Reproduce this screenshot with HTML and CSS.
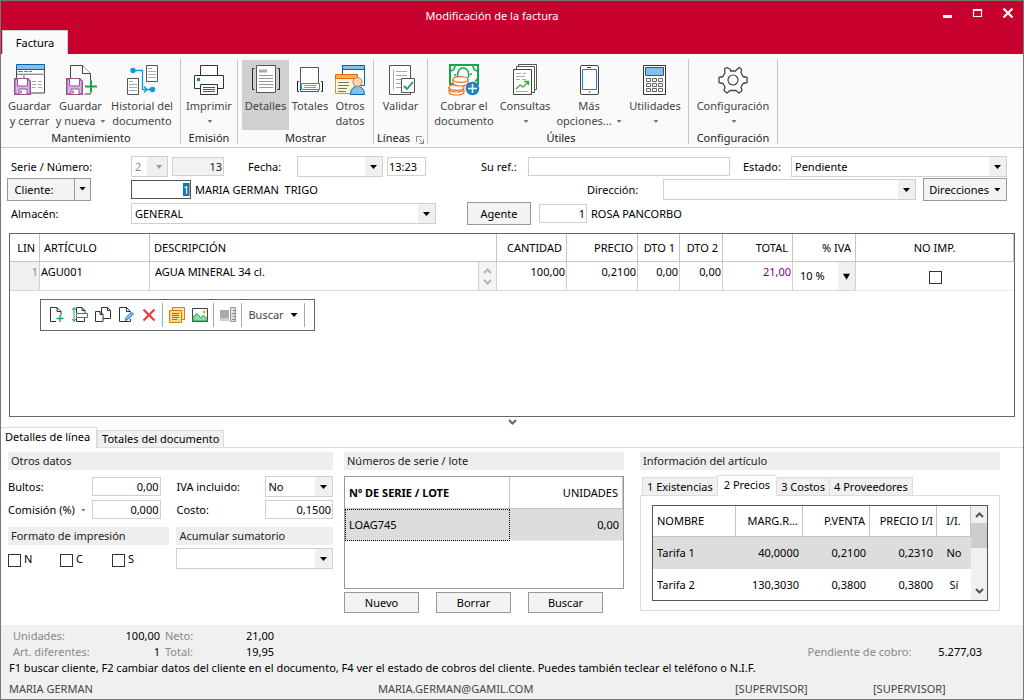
FILE: index.html
```html
<!DOCTYPE html>
<html lang="es">
<head>
<meta charset="utf-8">
<title>Modificación de la factura</title>
<link rel="stylesheet" href="styles.css">
</head>
<body>
<svg class="defs" aria-hidden="true">
  <symbol id="floppy" viewBox="0 0 17 17">
    <path d="M.75.75h13l2.5 2.5v13H.75z" fill="#deb4e0" stroke="#9b4f96" stroke-width="1.5"/>
    <path d="M3.5 1v7h10V1M5 16v-5h8v5" fill="#fff" stroke="#9b4f96"/>
    <path d="M7 12.500v3" stroke="#777" stroke-width="1.500"/>
  </symbol>
</svg>
<div class="window">
  <header class="titlebar">
    <h1 class="title">Modificación de la factura</h1>
    <button class="winbtn" aria-label="Minimizar"><svg width="12" height="12"><path d="M1 9.500h9" stroke="#fff" stroke-width="3"/></svg></button>
    <button class="winbtn" aria-label="Maximizar"><svg width="12" height="12"><path d="M1.500 2.500h8v7h-8zM1 3h9" fill="none" stroke="#fff" stroke-width="1.200"/><path d="M1 3h9" stroke="#fff" stroke-width="2"/></svg></button>
    <button class="winbtn" aria-label="Cerrar"><svg width="12" height="12"><path d="M1.500 1.500l9 9m0-9l-9 9" stroke="#fff" stroke-width="2.200"/></svg></button>
  </header>
  <nav class="maintabs"><button class="maintab">Factura</button></nav>

  <section class="ribbon">
    <div class="group group-save">
      <div class="tools">
        <button class="tool w51"><svg class="ico" viewBox="0 0 32 32"><path d="M2.500 5v24h28V5" fill="#fff" stroke="#444"/><path d="M2.500.5h28v5h-28z" fill="#83beec" stroke="#0063b1"/><path d="M4 7.500h5m1 0h4m1 0h3M3 10.500h28M10 10v5" stroke="#777"/><path d="M3 10h28M18 17.500h4m2 0h4M18 20.500h4m2 0h4M18 23.500h4m2 0h4M9.500 10v5" stroke="#aaa"/><use href="#floppy" y="14" width="17" height="17"/></svg><span>Guardar<br>y cerrar</span></button>
        <button class="tool w51"><svg class="ico" viewBox="0 0 32 32"><path d="M5.500 14V1.500h12l8 8V21M25.500 29v1h-6" fill="none" stroke="#444"/><path d="M17.500 1.500v8h8" fill="#fff" stroke="#444"/><use href="#floppy" x="1" y="14" width="17" height="17"/><path d="M20 22.500h12M26 16.500v12" stroke="#10a64a" stroke-width="2"/></svg><span>Guardar<br>y nueva <i class="dd"></i></span></button>
        <button class="tool w72"><svg class="ico" viewBox="0 0 32 32"><path d="M20.500 1.500h11v16h-11zM1.500 14.500h11v16h-11z" fill="#fff" stroke="#555"/><path d="M22 4.500h4m-4 3h8m-8 3h8m-8 3h8M3 17.500h4m-4 3h8m-8 3h8m-8 3h8" stroke="#aaa"/><path d="M7 6.500h9.500v19H26M18 22.500l3 3-3 3" fill="none" stroke="#0a9be0" stroke-width="1.300"/><circle cx="7" cy="6.500" r="2.700" fill="#0a9be0"/><circle cx="26.500" cy="25.500" r="2.700" fill="#0a9be0"/></svg><span>Historial del<br>documento</span></button>
      </div>
      <h2 class="caption">Mantenimiento</h2>
    </div>
    <div class="group">
      <div class="tools">
        <button class="tool w56"><svg class="ico" viewBox="0 0 32 32"><path d="M7.500 12V1.500h17V12" fill="#fff" stroke="#333"/><path d="M1.500 11.500h29v13h-29z" fill="#fff" stroke="#333"/><path d="M7.500 20.500h17v10h-17z" fill="#fff" stroke="#333"/><path d="M10 23.500h12m-12 2h12m-12 2h12" stroke="#555"/><path d="M4 14h3v3H4z" fill="#0a7fd0"/></svg><span>Imprimir<br><i class="dd"></i></span></button>
      </div>
      <h2 class="caption">Emisión</h2>
    </div>
    <div class="group group-show">
      <div class="tools">
        <button class="tool w47 active" aria-pressed="true"><svg class="ico" viewBox="0 0 32 32"><path d="M6.500 1.500h19v27h-19z" fill="#fff" stroke="#555"/><path d="M9 7h8" stroke="#aaa" stroke-width="3"/><path d="M9 11.500h14m-14 3h14m-14 3h14m-14 3h14m-14 3h14" stroke="#999"/><path d="M4.500 4.500h-2v21h2M27.500 4.500h2v21h-2" fill="none" stroke="#222"/></svg><span>Detalles</span></button>
        <button class="tool w42"><svg class="ico" viewBox="0 0 32 32"><path d="M6.500 3.500h18v24h-18z" fill="#fff" stroke="#555"/><path d="M8.500 19.500h19M8.500 19.500h14v6h-14z" fill="#fff" stroke="none"/><path d="M7.500 19.500h18v6h-18z" fill="#fff" stroke="#0a9be0"/><path d="M10 21.500h12m-12 2h12" stroke="#999"/><path d="M5 17.500H3.500v10H5M27 17.500h1.500v10H27" fill="none" stroke="#222"/></svg><span>Totales</span></button>
        <button class="tool w38"><svg class="ico" viewBox="0 0 32 32"><path d="M8.500 1.500h22v20h-22z" fill="#fff" stroke="#0063b1"/><path d="M8.500 1.500h22v4h-22z" fill="#83beec" stroke="#0063b1"/><path d="M1.500 10.500h22v19h-22z" fill="#fff3d4" stroke="#d9962f"/><path d="M1.500 10.500h22v4h-22z" fill="#ffb347" stroke="#dd6b10"/><path d="M4 18.500h11m-11 3h11m-11 3h9m-9 3h8" stroke="#777"/><path d="M16.500 30.500c0-11 14-11 14 0z" fill="#83beec" stroke="#0063b1"/><circle cx="23.500" cy="18" r="4.500" fill="#fbd5ac" stroke="#b88656"/></svg><span>Otros<br>datos</span></button>
      </div>
      <h2 class="caption">Mostrar</h2>
    </div>
    <div class="group">
      <div class="tools">
        <button class="tool w53"><svg class="ico" viewBox="0 0 32 32"><path d="M4.500 1.500h21v29h-21z" fill="#fff" stroke="#555"/><path d="M11 7.500h11m-11 4h11m-11 4h8m-8 4h6m-6 4h5" stroke="#aaa"/><path d="M8 7h1m-1 4h1m-1 4h1m-1 4h1m-1 4h1" stroke="#d22"/><path d="M8 9h1m-1 4h1m-1 4h1m-1 4h1m-1 4h1" stroke="#19a24a"/><path d="M16.500 14.500h13v14h-13z" fill="#fff" stroke="#555"/><path d="M19 22l3 3 6-7" fill="none" stroke="#10a64a" stroke-width="1.800"/></svg><span>Validar</span></button>
      </div>
      <h2 class="caption">Líneas <svg class="launch" width="8" height="8"><path d="M.5 6V.5H6M3 3l4 4M7.500 3.500v4h-4" fill="none" stroke="#888"/></svg></h2>
    </div>
    <div class="group group-util">
      <div class="tools">
        <button class="tool w60"><svg class="ico" viewBox="0 0 32 32"><path d="M2 1h28v19H2z" fill="#fff" stroke="#10a64a" stroke-width="2"/><path d="M2 7c4 0 5-2 5-6m23 6c-4 0-5-2-5-6M11 16c-3-4-1-12 4-12s7 6 5 10M6 11h2m14-1h2M27 18l3-4" fill="none" stroke="#10a64a" stroke-width="1.500"/><g fill="#fff" stroke="#e9732a" stroke-width="1.200"><path d="M1 26v2c1 4 14 4 15 0v-2M1 23v2c1 4 14 4 15 0"/><ellipse cx="8.500" cy="23.500" rx="7.500" ry="2.800"/><path d="M5 15v4c1 4 14 4 15 0v-4"/><ellipse cx="12.500" cy="15.500" rx="7.500" ry="2.800"/></g><circle cx="24.500" cy="24.500" r="6.800" fill="#1783cf"/><path d="M20 24.500h9m-4.500-4.500v9" stroke="#fff" stroke-width="1.500"/></svg><span>Cobrar el<br>documento</span></button>
        <button class="tool w62"><svg class="ico" viewBox="0 0 32 32"><path d="M9.500.5h18v25h-18z" fill="#fff" stroke="#555"/><path d="M7.500 2.500h18v26h-18z" fill="#fff" stroke="#555"/><path d="M4.500 5.500h18v25h-18z" fill="#fff" stroke="#444"/><path d="M7 9.500h5m2 0h3m-10 3h9m-9 3h4m2 0h4M7 27.500h12" stroke="#aaa"/><path d="M7 25l4-4 3 2 5-5m-4-.5h4.500V21" fill="none" stroke="#3aa935" stroke-width="1.300"/></svg><span>Consultas<br><i class="dd"></i></span></button>
        <button class="tool w66"><svg class="ico" viewBox="0 0 32 32"><rect x="7.500" y="1.500" width="18" height="29" rx="1.500" fill="#fff" stroke="#444"/><path d="M9.500 5.500h14v20h-14z" fill="#fff" stroke="#1783cf"/><path d="M14 3.500h4m-2.500 24.500h2" stroke="#444"/></svg><span>Más<br>opciones... <i class="dd"></i></span></button>
        <button class="tool w66"><svg class="ico" viewBox="0 0 32 32"><path d="M4.500 1.500h22v29h-22z" fill="#fff" stroke="#333"/><path d="M6.500 3.500h18v8h-18z" fill="#83beec" stroke="#0063b1"/><path d="M7.500 14.500h4v3h-4zm6 0h4v3h-4zm6 0h4v3h-4zm-12 5h4v3h-4zm6 0h4v3h-4zm6 0h4v3h-4zm-12 5h4v3h-4zm6 0h4v3h-4zm6 0h4v3h-4z" fill="none" stroke="#666"/></svg><span>Utilidades<br><i class="dd"></i></span></button>
      </div>
      <h2 class="caption">Útiles</h2>
    </div>
    <div class="group">
      <div class="tools">
        <button class="tool w88"><svg class="ico" viewBox="0 0 32 32"><path d="M13.500 7V5.500L10 3.500 7.500 5l.5 3.500-2 4-4 1v5l4 1 2 3.500-1 3.500 3 2.500 3-2.500h6l3 2.500 3-2.500-1-3.500 2-3.500 4-1v-5l-4-1-2-4 .5-3.500L22 3.500 18.500 7z" fill="#fff" stroke="#444" stroke-width="1.300" stroke-linejoin="round"/><circle cx="16" cy="16" r="5" fill="#fff" stroke="#444" stroke-width="1.200"/></svg><span>Configuración<br><i class="dd"></i></span></button>
      </div>
      <h2 class="caption">Configuración</h2>
    </div>
  </section>

  <form class="head">
    <div class="row">
      <label class="lead" for="serie">Serie / Número:</label>
      <select id="serie" class="w37 gap4" disabled><option>2</option></select>
      <input class="w52 num" value="13" aria-label="Número" disabled>
      <label class="fecha" for="fecha">Fecha:</label>
      <select id="fecha" class="w86 gap4"><option></option></select>
      <input class="w39 time" value="13:23" aria-label="Hora">
      <label class="suref" for="suref">Su ref.:</label>
      <input id="suref" class="grow">
      <label class="estado" for="estado">Estado:</label>
      <select id="estado" class="w216"><option>Pendiente</option></select>
    </div>
    <div class="row">
      <div class="lead-split"><button type="button" class="btn split">Cliente:</button><button type="button" class="btn splitarrow" aria-label="Opciones de cliente"><i class="dd dark"></i></button></div>
      <div class="clientbox"><input class="client" value="1" aria-label="Código de cliente"><mark class="sel">1</mark></div>
      <output class="name grow">MARIA GERMAN&nbsp; TRIGO</output>
      <label class="direccion" for="direccion">Dirección:</label>
      <select id="direccion" class="w253"><option></option></select>
      <button type="button" class="btn w84 dirs">Direcciones <i class="dd dark"></i></button>
    </div>
    <div class="row">
      <label class="lead" for="almacen">Almacén:</label>
      <select id="almacen" class="w305"><option>GENERAL</option></select>
      <button type="button" class="btn agent">Agente</button>
      <input class="w48 num" value="1" aria-label="Código de agente">
      <output class="name">ROSA PANCORBO</output>
    </div>
  </form>

  <section class="lines">
    <table class="grid">
      <colgroup><col class="w30"><col class="w110"><col><col class="w70"><col class="w71"><col class="w42"><col class="w43"><col class="w70"><col class="w63"><col class="w158"></colgroup>
      <thead><tr><th class="r">LIN</th><th>ARTÍCULO</th><th>DESCRIPCIÓN</th><th class="r">CANTIDAD</th><th class="r">PRECIO</th><th class="r">DTO 1</th><th class="r">DTO 2</th><th class="r">TOTAL</th><th class="r">% IVA</th><th class="c">NO IMP.</th></tr></thead>
      <tbody><tr>
        <td class="r lin">1</td>
        <td><input class="cell" value="AGU001" aria-label="Artículo"></td>
        <td><div class="desc"><input class="cell wide" value="AGUA MINERAL 34 cl." aria-label="Descripción"><span class="spin"><button aria-label="Subir"><svg width="9" height="6"><path d="M1 5l3.500-3.500L8 5" fill="none" stroke="#b5b5b5" stroke-width="2"/></svg></button><button aria-label="Bajar"><svg width="9" height="6"><path d="M1 1l3.500 3.500L8 1" fill="none" stroke="#b5b5b5" stroke-width="2"/></svg></button></span></div></td>
        <td><input class="cell num" value="100,00" aria-label="Cantidad"></td>
        <td><input class="cell num" value="0,2100" aria-label="Precio"></td>
        <td><input class="cell num" value="0,00" aria-label="Dto 1"></td>
        <td><input class="cell num" value="0,00" aria-label="Dto 2"></td>
        <td><input class="cell num total" value="21,00" aria-label="Total"></td>
        <td><select class="iva" aria-label="% IVA"><option>10 %</option></select></td>
        <td class="c mid"><input type="checkbox" aria-label="No imprimir"></td>
      </tr></tbody>
    </table>
    <div class="toolbar">
      <button class="tb" aria-label="Nueva línea"><svg viewBox="0 0 18 18"><path d="M8 15.500H2.500v-14H9l4 4V9M9 1.500v4h4" fill="none" stroke="#333"/><path d="M8.500 12.500h7m-3.500-3.500v7" stroke="#10a64a" stroke-width="1.300"/></svg></button>
      <button class="tb" aria-label="Insertar línea"><svg viewBox="0 0 18 18"><path d="M5.500 7V1.500H11l3 3V7M11 1.500v3h3M5.500 12v3.500h8V12" fill="none" stroke="#333"/><path d="M5.500 7.500h11v4h-11z" fill="#fff" stroke="#1783cf"/><path d="M3 2v13M1 4l2-2.500L5 4M1 13l2 2.500L5 13" fill="none" stroke="#10a64a"/></svg></button>
      <button class="tb" aria-label="Duplicar línea"><svg viewBox="0 0 18 18"><path d="M7.500 12.500v-11h6l3 3v8zM13.500 1.500v3h3" fill="#fff" stroke="#333"/><path d="M1.500 15.500v-10H6l3 3v7zM6 5.500v3h3" fill="#fff" stroke="#333"/></svg></button>
      <button class="tb" aria-label="Modificar línea"><svg viewBox="0 0 18 18"><path d="M13.500 13v2.500h-11v-14h7l4 4M9.500 1.500v4h4" fill="none" stroke="#333"/><path d="M8.500 14.500l.5-3 5.500-5.500 2 2-5.500 5.500z" fill="#83beec" stroke="#1783cf"/></svg></button>
      <button class="tb" aria-label="Borrar línea"><svg viewBox="0 0 18 18"><path d="M3.500 3.500l11 11m0-11l-11 11" stroke="#ee3b3b" stroke-width="2.200"/></svg></button>
      <i class="sep"></i>
      <button class="tb" aria-label="Notas"><svg viewBox="0 0 18 18"><path d="M4.500 1.500h12v12h-12z" fill="#fde3b1" stroke="#dd7b10"/><path d="M1.500 4.500h12v12h-12z" fill="#f9d596" stroke="#dd7b10"/><path d="M4 7.500h7m-7 2h7m-7 2h7m-7 2h5" stroke="#777"/></svg></button>
      <button class="tb" aria-label="Imagen"><svg viewBox="0 0 18 18"><path d="M1.500 2.500h15v13h-15z" fill="#fff" stroke="#444"/><path d="M2 11l4-3.500 3.500 4 3-2 3.500 3V15H2z" fill="#90d8a9" stroke="#10a64a"/><circle cx="13" cy="6" r="1.500" fill="#f6a13a"/></svg></button>
      <i class="sep"></i>
      <button class="tb" aria-label="Medidas" disabled><svg viewBox="0 0 18 18"><path d="M1 4h9v8H1z" fill="#aaa"/><path d="M1 12h9v3H1z" fill="#ccc"/><path d="M11.500 1.500h5v14h-5z" fill="#ddd" stroke="#999"/><path d="M14 4.500h2m-3 3h3m-2 3h2m-3 3h3" stroke="#888"/></svg></button>
      <i class="sep"></i>
      <button class="tb find">Buscar <i class="dd dark"></i></button>
      <i class="sep"></i>
    </div>
  </section>
  <button class="fold" aria-label="Contraer panel"><svg width="9" height="6"><path d="M1 1l3.500 3.500L8 1" fill="none" stroke="#666" stroke-width="2"/></svg></button>

  <nav class="subtabs"><button class="subtab on">Detalles de línea</button><button class="subtab">Totales del documento</button></nav>

  <main class="panels">
    <section class="panel other">
      <h3 class="bar">Otros datos</h3>
      <div class="fields">
        <label for="bultos">Bultos:</label><input id="bultos" class="num" value="0,00">
        <label class="second" for="ivainc">IVA incluido:</label><select id="ivainc"><option>No</option></select>
        <label for="comision" class="com">Comisión (%) <i class="dd comdd"></i></label><input id="comision" class="num" value="0,000">
        <label class="second" for="costo">Costo:</label><input id="costo" class="num" value="0,1500">
      </div>
      <div class="pair">
        <div class="fmt"><h3 class="bar">Formato de impresión</h3>
          <div class="checks"><label><input type="checkbox">N</label><label><input type="checkbox">C</label><label><input type="checkbox">S</label></div></div>
        <div class="acc"><h3 class="bar">Acumular sumatorio</h3><select class="full" aria-label="Acumular sumatorio"><option></option></select></div>
      </div>
    </section>
    <section class="panel serial">
      <h3 class="bar">Números de serie / lote</h3>
      <div class="lotbox">
        <table class="grid lots"><colgroup><col><col class="w113"></colgroup>
          <thead><tr><th><b>Nº DE SERIE / LOTE</b></th><th class="r">UNIDADES</th></tr></thead>
          <tbody><tr class="picked"><td class="focus">LOAG745</td><td class="r">0,00</td></tr></tbody></table>
      </div>
      <div class="actions"><button class="btn">Nuevo</button><button class="btn">Borrar</button><button class="btn">Buscar</button></div>
    </section>
    <section class="panel info">
      <h3 class="bar">Información del artículo</h3>
      <nav class="minitabs"><button>1 Existencias</button><button class="on">2 Precios</button><button>3 Costos</button><button>4 Proveedores</button></nav>
      <div class="sheet"><div class="pricebox">
        <table class="grid prices"><colgroup><col><col class="w67"><col class="w67"><col class="w67"><col class="w34"></colgroup>
          <thead><tr><th>NOMBRE</th><th class="r">MARG.R...</th><th class="r">P.VENTA</th><th class="r tight">PRECIO I/I</th><th class="c">I/I.</th></tr></thead>
          <tbody><tr class="picked"><td>Tarifa 1</td><td class="r">40,0000</td><td class="r">0,2100</td><td class="r">0,2310</td><td class="c">No</td></tr>
          <tr><td>Tarifa 2</td><td class="r">130,3030</td><td class="r">0,3800</td><td class="r">0,3800</td><td class="c">Sí</td></tr></tbody></table>
        <div class="scroll"><svg width="9" height="6"><path d="M1 5l3.500-3.500L8 5" fill="none" stroke="#555" stroke-width="2"/></svg><i class="thumb"></i><svg width="9" height="6"><path d="M1 1l3.500 3.500L8 1" fill="none" stroke="#555" stroke-width="2"/></svg></div>
      </div></div>
    </section>
  </main>

  <footer class="foot">
    <div class="summary">
      <dl class="totals"><dt>Unidades:</dt><dd>100,00</dd><dt>Neto:</dt><dd>21,00</dd><dt>Art. diferentes:</dt><dd>1</dd><dt>Total:</dt><dd>19,95</dd></dl>
      <dl class="pending"><dt>Pendiente de cobro:</dt><dd>5.277,03</dd></dl>
    </div>
    <p class="hint">F1 buscar cliente, F2 cambiar datos del cliente en el documento, F4 ver el estado de cobros del cliente. Puedes también teclear el teléfono o N.I.F.</p>
    <div class="status"><span class="s1">MARIA GERMAN</span><span class="s2">MARIA.GERMAN@GAMIL.COM</span><span class="s3">[SUPERVISOR]</span><span class="s4">[SUPERVISOR]</span></div>
  </footer>
</div>
</body>
</html>
```
FILE: styles.css
```css
* { box-sizing: border-box; }
body { margin: 0; background: #fff; color: #000; font: 11px/16px "Noto Sans", "Open Sans", sans-serif; }
h1, h2, h3, p, dl, dd { margin: 0; font-size: 11px; font-weight: 400; }
button, input, select { font: inherit; color: inherit; margin: 0; border-radius: 0; }
button { padding: 0; border: 0; background: none; white-space: nowrap; }
label { white-space: nowrap; }
.defs { display: none; }
.window { min-height: 100vh; display: flex; flex-direction: column; border: 1px solid #777; }

.titlebar { display: flex; align-items: center; height: 29px; padding-left: 50px; background: #c8002d; color: #fff; }
.title { flex: 1; text-align: center; }
.winbtn { width: 30px; height: 24px; align-self: flex-start; }
.winbtn svg { display: block; margin: 6px auto; }
.maintabs { display: flex; height: 24px; padding-left: 1px; background: #c8002d; }
.maintab { width: 66px; background: #fafafa; border: 1px solid #ccc; border-bottom: 0; }

.ribbon { display: flex; height: 94px; padding: 5px 0 3px; background: #fafafa; border-bottom: 1px solid #c6c6c6; }
.group { display: flex; flex-direction: column; border-right: 1px solid #c6c6c6; }
.group-save { padding: 0 2px 0 3px; }
.group-show { padding: 0 4px; }
.group-util { padding-left: 6px; }
.tools { display: flex; flex: 1; }
.tool { display: flex; flex-direction: column; align-items: center; gap: 2px; height: 70px; padding-top: 4px; line-height: 15px; color: #444; margin-top: 1px; }
.tool.active { background: #d0d0d0; }
.ico { width: 32px; height: 32px; flex: none; }
.caption { text-align: center; line-height: 16px; color: #222; }
.launch { margin: 0 0 -2px 3px; }
.dd { display: inline-block; width: 5px; height: 3px; margin: 0 0 2px 2px; background: #777; clip-path: polygon(0 0, 100% 0, 50% 100%); }
.dd.dark { width: 7px; height: 4px; background: #000; }

.w30 { width: 30px; } .w34 { width: 34px; } .w37 { width: 37px; } .w38 { width: 38px; } .w39 { width: 39px; }
.w42 { width: 42px; } .w43 { width: 43px; } .w47 { width: 47px; } .w48 { width: 48px; } .w51 { width: 51px; }
.w52 { width: 52px; } .w53 { width: 53px; } .w56 { width: 56px; } .w60 { width: 60px; } .w62 { width: 62px; }
.w63 { width: 63px; } .w66 { width: 66px; } .w67 { width: 67px; } .w70 { width: 70px; } .w71 { width: 71px; }
.w72 { width: 72px; } .w84 { width: 84px; } .w86 { width: 86px; } .w88 { width: 88px; } .w110 { width: 110px; }
.w113 { width: 113px; } .w158 { width: 158px; } .w216 { width: 216px; } .w253 { width: 253px; } .w305 { width: 305px; }
.gap4 { margin-right: 4px; }
.grow { flex: 1; min-width: 0; }

input { height: 19px; padding: 0 3px; border: 1px solid #d0d0d0; background: #fff; }
input:disabled { background: #f2f2f2; color: #222; }
.num { text-align: right; padding: 0 1px; }
.time { padding: 0 1px; }
select { appearance: none; height: 21px; padding: 0 18px 0 3px; border: 1px solid #d0d0d0; background: url("data:image/svg+xml,%3Csvg xmlns='http://www.w3.org/2000/svg' width='17' height='19'%3E%3Cpath d='M0 0h17v19H0z' fill='%23f0f0f0'/%3E%3Cpath d='M5 8h7L8.500 12z'/%3E%3C/svg%3E") right center no-repeat #fff; }
select:disabled { opacity: 1; color: #888; background-image: url("data:image/svg+xml,%3Csvg xmlns='http://www.w3.org/2000/svg' width='20' height='19'%3E%3Cpath d='M0 0h20v19H0z' fill='%23f0f0f0'/%3E%3Cpath d='M9 8h6l-3 4z' fill='%23999'/%3E%3C/svg%3E"); }
input[type=checkbox] { appearance: none; width: 13px; height: 13px; padding: 0; border: 1px solid #333; vertical-align: middle; }
.btn { height: 23px; border: 1px solid #999; background: #f3f3f3; }

.head { padding: 7px 16px 7px 6px; }
.row { display: flex; align-items: center; height: 23px; }
.row:last-child { height: 25px; }
.lead { width: 124px; padding-left: 4px; }
.lead-split { display: flex; width: 124px; }
.split { width: 68px; padding-right: 14px; }
.splitarrow { width: 17px; margin-left: -1px; }
.splitarrow .dd { margin: 0 0 3px; }
.fecha { width: 73px; padding-left: 24px; }
.suref { width: 102px; padding-left: 55px; }
.estado { width: 61px; padding-left: 13px; }
.direccion { width: 76px; }
.dirs { margin-left: 7px; }
.clientbox { position: relative; display: flex; }
.client { width: 60px; padding: 0 2px; border-color: #555; text-align: right; }
.sel { position: absolute; right: 1px; top: 3px; width: 7px; line-height: 13px; background: #0078d7; color: #fff; border-right: 1px solid #ff9632; text-align: center; }
.name { padding-left: 4px; }
.agent { width: 64px; margin: 0 8px 0 31px; }

.lines { flex: 1; min-height: 184px; margin: 0 8px; border: 1px solid #666; }
.grid { width: 100%; border-collapse: separate; border-spacing: 0; table-layout: fixed; }
.grid th { height: 28px; padding: 0 4px; text-align: left; font-weight: 400; border-right: 1px solid #c4c4c4; border-bottom: 1px solid #c4c4c4; white-space: nowrap; }
.grid .r { text-align: right; }
.grid .c { text-align: center; }
.lines td { height: 29px; padding: 0; vertical-align: top; border-right: 1px solid #d0d0d0; border-bottom: 1px solid #d8d8d8; }
.lines td:last-child { border-right: 0; border-color: #eee; }
.lines .lin { padding: 2px 1px; background: #f0f0f0; color: #888; }
.lines .mid { vertical-align: middle; }
.cell { display: block; width: 100%; border: 0; padding: 0 1px; }
.cell.wide { padding-left: 5px; }
.total { color: #800080; }
.desc { display: flex; }
.spin { display: flex; flex-direction: column; justify-content: space-evenly; width: 18px; height: 28px; flex: none; border-left: 1px solid #d0d0d0; background: #f4f4f4; }
.spin button { line-height: 6px; }
.iva { width: 100%; height: 28px; border: 0; padding-left: 7px; background-size: 17px 28px; }

.toolbar { display: inline-flex; align-items: center; height: 32px; margin: 8px 0 0 30px; padding: 0 7px 0 4px; border: 1px solid #666; color: #444; }
.tb { width: 23px; height: 24px; }
.tb svg { width: 18px; height: 18px; display: block; margin: auto; }
.find { width: 58px; }
.find .dd { margin-left: 4px; }
.sep { width: 1px; height: 24px; margin: 0 2px; background: #aaa; }
.fold { display: flex; justify-content: center; width: 100%; height: 10px; padding-top: 2px; }

.subtabs { display: flex; align-items: flex-end; height: 21px; border-bottom: 1px solid #dcdcdc; }
.subtab { height: 17px; padding: 0 4px; background: #f0f0f0; border: 1px solid #dcdcdc; border-bottom: 0; }
.subtab.on { height: 21px; margin-bottom: -1px; padding: 0 6px 2px 4px; background: #fff; border-left: 0; }

.panels { display: flex; align-items: flex-start; min-height: 177px; padding: 4px 23px 0 7px; }
.bar { height: 18px; padding: 0 3px; line-height: 18px; background: #eee; color: #222; }
.panel > .bar { margin-bottom: 6px; }
.other { flex: 325 1 0; }
.serial { flex: 280 1 0; margin: 0 16px 0 11px; }
.info { flex: 360 1 0; }
.fields { display: grid; grid-template-columns: 84px 1fr 104px 1fr; row-gap: 3px; align-items: center; margin-bottom: 8px; }
.fields input, .fields select { width: 100%; }
.second { padding-left: 16px; }
.com { padding: 0; }
.comdd { margin-left: 3px; }
.pair { display: flex; gap: 7px; }
.fmt { flex: 162 1 0; } .acc { flex: 157 1 0; }
.checks { display: flex; padding-top: 6px; }
.checks label { width: 52px; }
.checks input { margin-right: 3px; }
.full { width: 100%; margin-top: 3px; }
.lotbox { height: 113px; border: 1px solid #999; }
.lots th { height: 32px; }
.lots td { height: 32px; padding: 0 4px; border-bottom: 1px solid #eee; }
.picked td { background: #ddd; }
.lots .focus { border: 1px dotted #000; padding-left: 3px; }
.actions { display: flex; gap: 17px; margin-top: 3px; }
.actions .btn { width: 75px; height: 21px; }
.minitabs { display: flex; align-items: flex-end; height: 20px; margin-top: -1px; padding-left: 2px; }
.minitabs button { height: 18px; padding: 0 4px; background: #f0f0f0; border: 1px solid #dcdcdc; border-bottom: 0; border-right-width: 0; }
.minitabs .on { height: 21px; margin-bottom: -1px; padding: 0 6px 2px; background: #fff; position: relative; }
.minitabs button:last-child { border-right-width: 1px; }
.sheet { padding: 9px 11px; border: 1px solid #dcdcdc; }
.pricebox { display: flex; border: 1px solid #555; }
.prices { flex: 1; width: 0; }
.prices th, .prices td { height: 32px; padding: 0 4px; white-space: nowrap; }
.prices th { height: 31px; }
.prices .tight { padding: 0 3px; }
.prices tr:last-child td { height: 31px; }
.scroll { display: flex; flex-direction: column; align-items: center; width: 16px; padding: 6px 0; background: #f0f0f0; }
.thumb { width: 16px; height: 25px; margin: 5px 0 auto; background: #cdcdcd; }

.foot { padding: 3px 8px 2px; background: #f0f0f0; }
.summary { display: flex; justify-content: space-between; align-items: flex-end; padding: 0 33px 0 4px; }
.totals { display: grid; grid-template-columns: 90px 57px 57px 57px; }
dt { color: #888; }
dd { text-align: right; }
.totals dt:nth-of-type(even) { padding-left: 5px; }
.pending { display: flex; gap: 27px; }
.status { display: flex; padding-top: 5px; color: #444; }
.s1 { flex: 369 1 0; } .s2 { flex: 357 1 0; } .s3 { flex: 138 1 0; } .s4 { flex: 142 1 0; }
```
